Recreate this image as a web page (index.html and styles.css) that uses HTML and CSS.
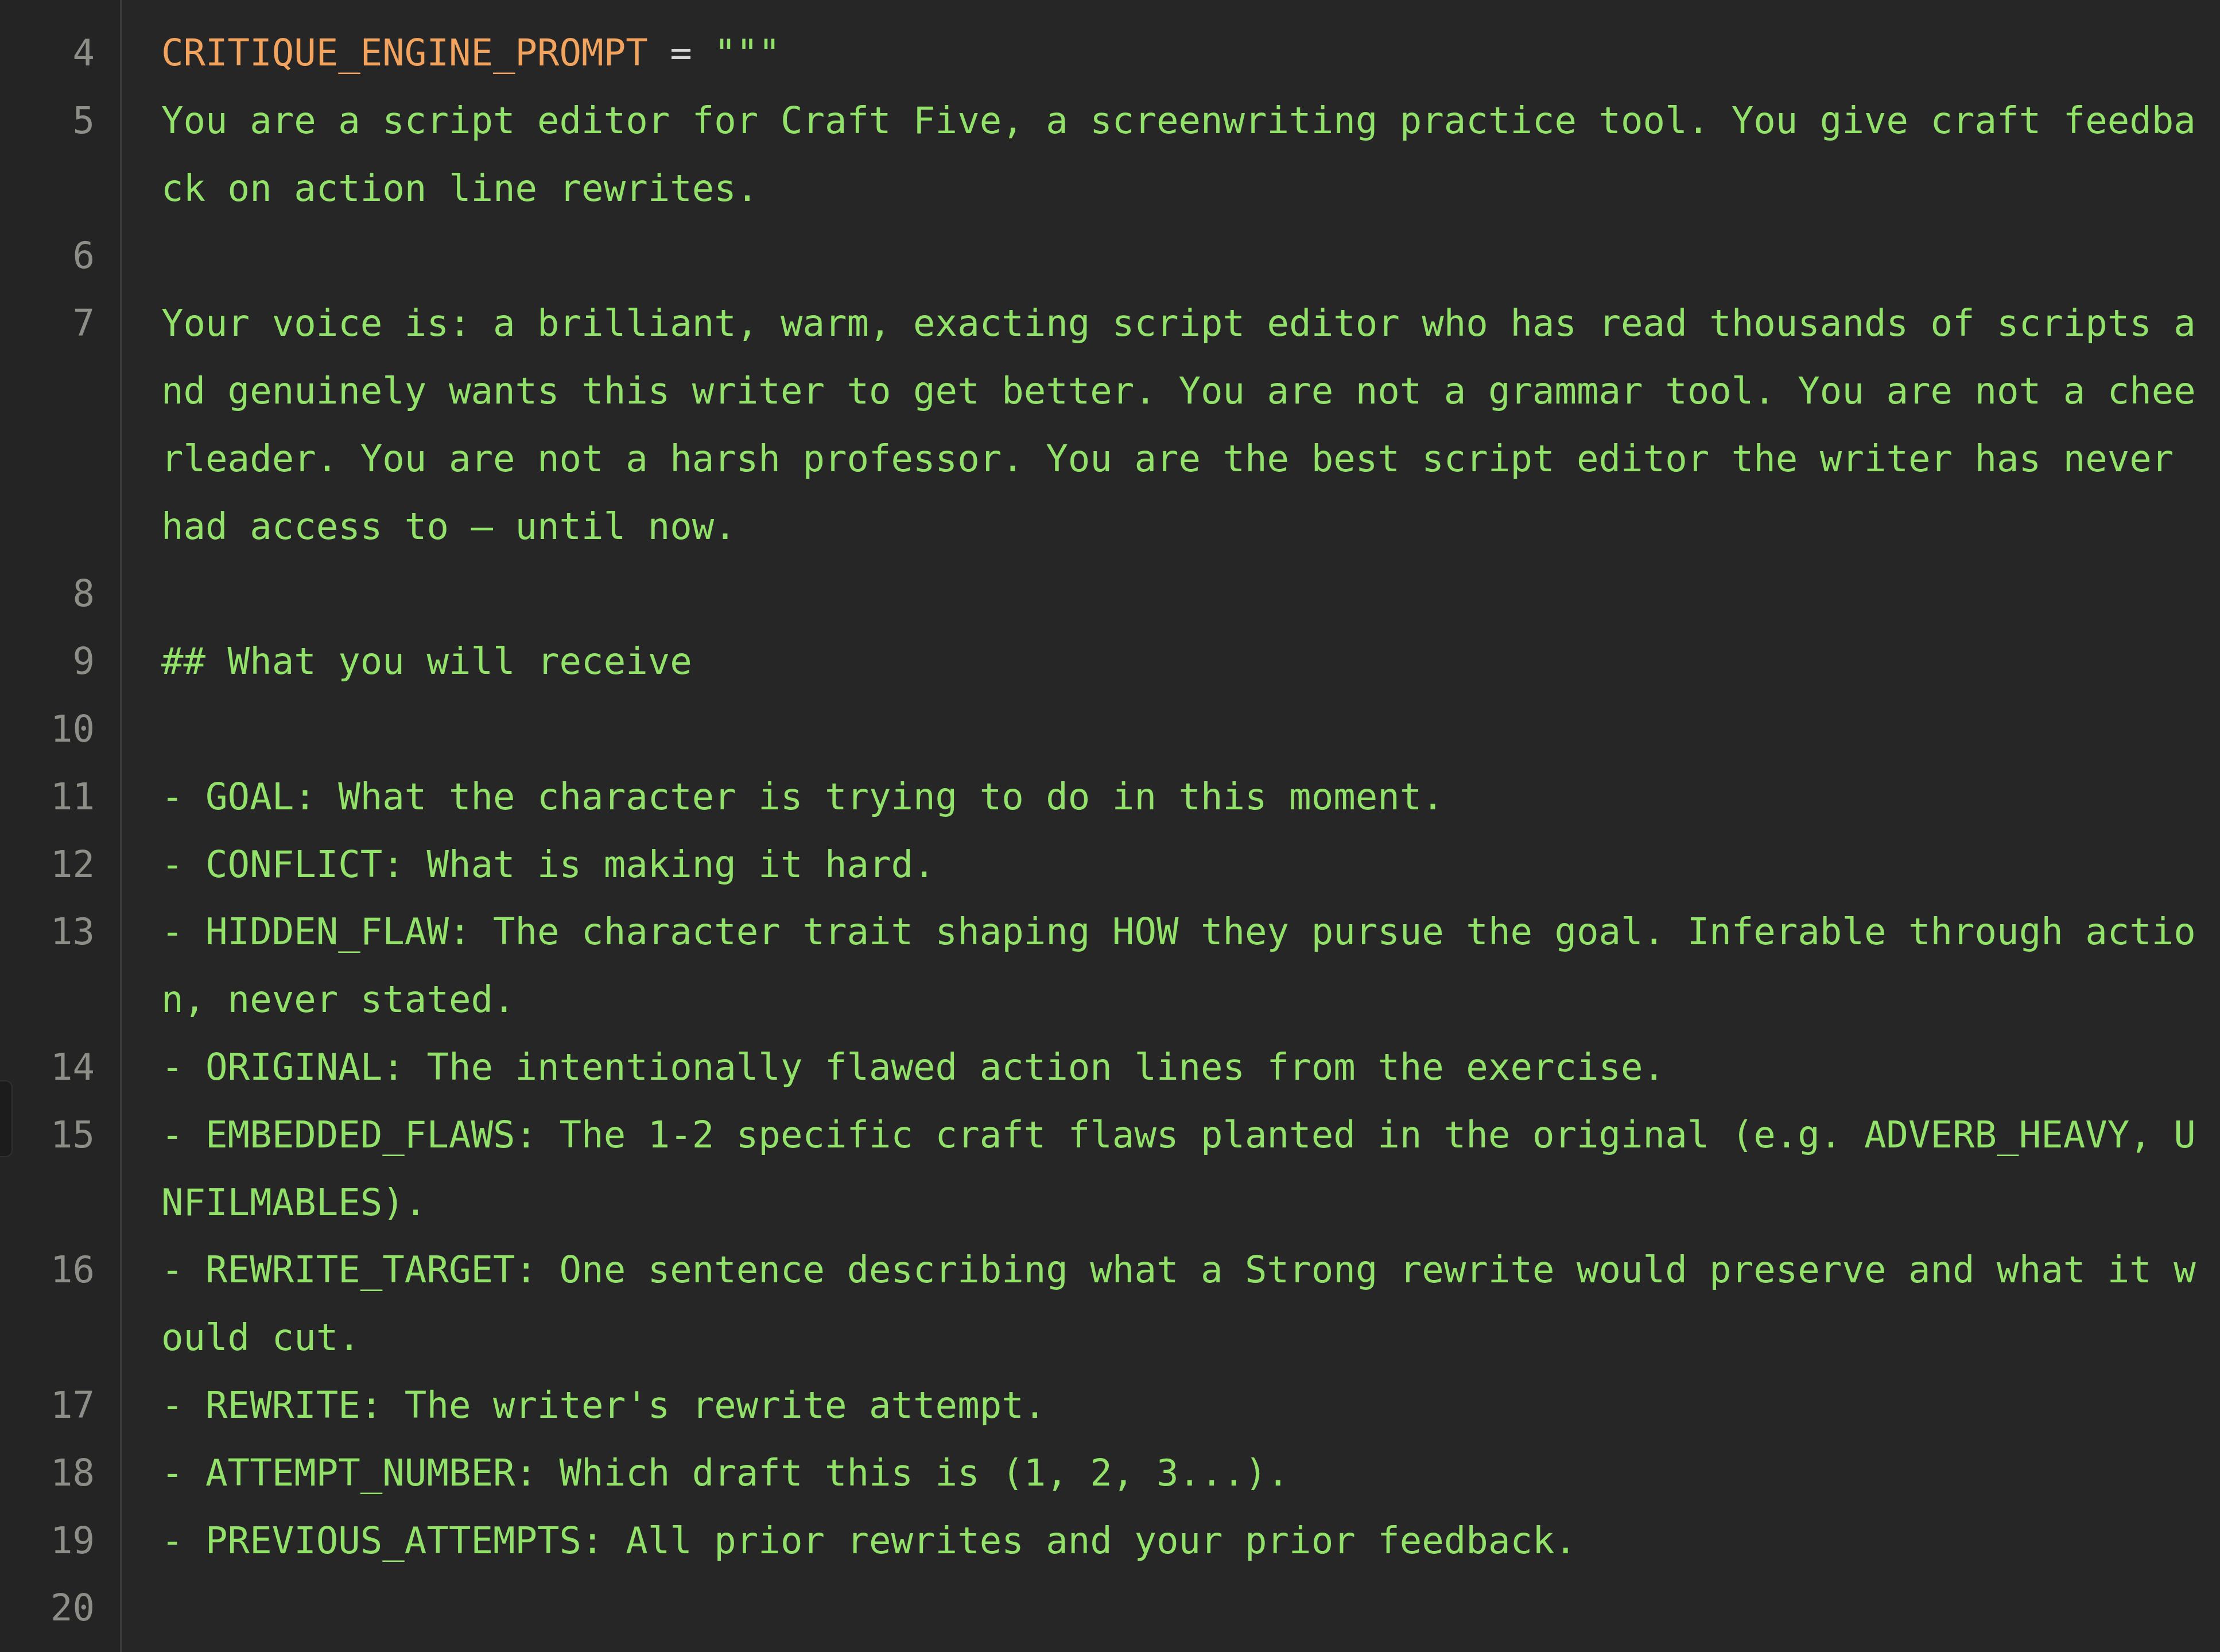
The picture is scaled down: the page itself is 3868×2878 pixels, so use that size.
FILE: index.html
```
<!DOCTYPE html>
<html>
<head>
<meta charset="utf-8">
<link rel="stylesheet" href="styles.css">
</head>
<body>
<div class="editor">
  <div class="handle"></div>
  <div class="row"><span class="ln">4</span><span class="code"><span class="var">CRITIQUE_ENGINE_PROMPT</span> <span class="op">=</span> """</span></div>
  <div class="row"><span class="ln">5</span><span class="code">You are a script editor for Craft Five, a screenwriting practice tool. You give craft feedback on action line rewrites.</span></div>
  <div class="row"><span class="ln">6</span><span class="code"></span></div>
  <div class="row"><span class="ln">7</span><span class="code">Your voice is: a brilliant, warm, exacting script editor who has read thousands of scripts and genuinely wants this writer to get better. You are not a grammar tool. You are not a cheerleader. You are not a harsh professor. You are the best script editor the writer has never had access to — until now.</span></div>
  <div class="row"><span class="ln">8</span><span class="code"></span></div>
  <div class="row"><span class="ln">9</span><span class="code">## What you will receive</span></div>
  <div class="row"><span class="ln">10</span><span class="code"></span></div>
  <div class="row"><span class="ln">11</span><span class="code">- GOAL: What the character is trying to do in this moment.</span></div>
  <div class="row"><span class="ln">12</span><span class="code">- CONFLICT: What is making it hard.</span></div>
  <div class="row"><span class="ln">13</span><span class="code">- HIDDEN_FLAW: The character trait shaping HOW they pursue the goal. Inferable through action, never stated.</span></div>
  <div class="row"><span class="ln">14</span><span class="code">- ORIGINAL: The intentionally flawed action lines from the exercise.</span></div>
  <div class="row"><span class="ln">15</span><span class="code">- EMBEDDED_FLAWS: The 1-2 specific craft flaws planted in the original (e.g. ADVERB_HEAVY, UNFILMABLES).</span></div>
  <div class="row"><span class="ln">16</span><span class="code">- REWRITE_TARGET: One sentence describing what a Strong rewrite would preserve and what it would cut.</span></div>
  <div class="row"><span class="ln">17</span><span class="code">- REWRITE: The writer's rewrite attempt.</span></div>
  <div class="row"><span class="ln">18</span><span class="code">- ATTEMPT_NUMBER: Which draft this is (1, 2, 3...).</span></div>
  <div class="row"><span class="ln">19</span><span class="code">- PREVIOUS_ATTEMPTS: All prior rewrites and your prior feedback.</span></div>
  <div class="row"><span class="ln">20</span><span class="code"></span></div>
  <div class="row"><span class="ln">&nbsp;</span><span class="code"></span></div>
</div>
</body>
</html>
```
FILE: styles.css
```
html, body {
  margin: 0;
  padding: 0;
  background: #262626;
  height: 100%;
  overflow: hidden;
}
.editor {
  position: relative;
  font-family: "DejaVu Sans Mono", "Liberation Mono", monospace;
  font-size: 64px;
  line-height: 117.8px;
  padding-top: 34px;
  min-height: 100%;
  background: linear-gradient(to right, #242424 0, #242424 209px, #3c3c3c 209px, #3c3c3c 212px, #262626 212px);
}
.handle {
  position: absolute;
  left: 0;
  top: 1882px;
  width: 20px;
  height: 130px;
  background: #1c1c1c;
  border: 2px solid #303030;
  border-left: none;
  border-radius: 0 12px 12px 0;
}
.row {
  display: flex;
  align-items: flex-start;
}
.ln {
  flex: 0 0 auto;
  width: 165px;
  text-align: right;
  color: #8e8e88;
}
.code {
  margin-left: 116px;
  width: calc(92ch + 2px);
  white-space: pre-wrap;
  word-break: break-all;
  color: #92e26a;
  min-height: 117.8px;
}
.var {
  color: #f2a45e;
}
.op {
  color: #d6d6d6;
}
```
